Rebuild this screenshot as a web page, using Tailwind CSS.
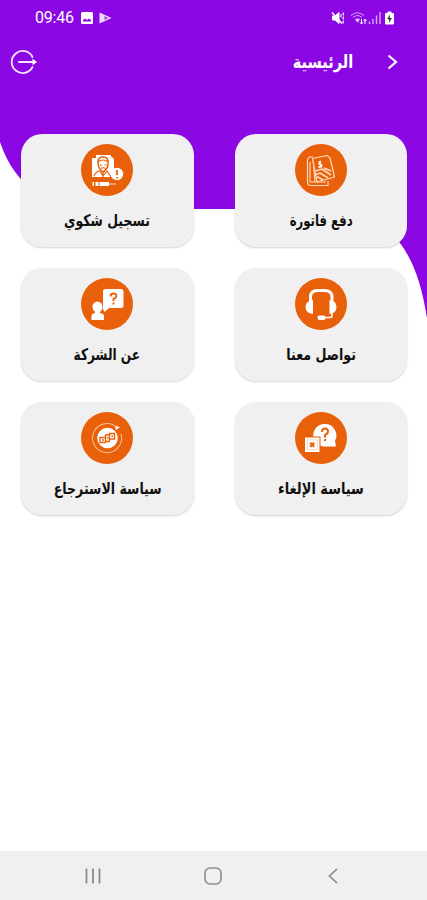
<!DOCTYPE html>
<html lang="ar">
<head>
  <meta charset="UTF-8" />
  <meta name="viewport" content="width=device-width, initial-scale=1.0"/>
  <title>الرئيسية</title>
  <script src="https://cdn.jsdelivr.net/npm/@tailwindcss/browser@4"></script>
</head>
<body class="bg-white font-['DejaVu_Sans',sans-serif]">
  <div class="relative isolate flex flex-col w-[427px] h-[900px] overflow-hidden">

    <!-- purple wave behind the header -->
    <svg class="absolute inset-0 -z-10" width="427" height="330" viewBox="0 0 427 330">
      <path d="M0 0H427V318C422 286 414 262 400 243C385 221 368 209 340 209H92C50 209 15 187 0 142Z" fill="#8b08e4"/>
    </svg>

    <!-- status bar -->
    <div class="flex items-center justify-between h-[35px] pl-[35px] pr-[33px] text-white">
      <div class="flex items-center">
        <span class="w-[39px] text-[16px] leading-4 tracking-[-0.2px] font-['Roboto',sans-serif]">09:46</span>
        <svg class="ml-[7px]" width="12" height="12" viewBox="0 0 12 12">
          <rect width="12" height="12" rx="1.5" fill="#fff"/>
          <path d="M2 9.5V8L4 6.5L6 8L8 6.5L10 8V9.5Z" fill="#8b08e4"/>
        </svg>
        <svg class="ml-[6px]" width="13" height="12" viewBox="0 0 13 12">
          <path d="M0.5 0.5L12.5 6L0.5 11.5Z" fill="#f3d9ff"/>
          <path d="M5.5 4L9 6L5.5 8Z" fill="#9b35e4"/>
        </svg>
      </div>
      <div class="flex items-center">
        <svg width="14" height="14" viewBox="0 0 14 14" fill="none" stroke="#fff">
          <path d="M1.5 5H4L8 1.5V12.5L4 9H1.5Z" fill="#fff"/>
          <path d="M1 1.5L11 12.5" stroke-width="1.4"/>
          <path d="M12.2 1.5V13" stroke-width="1.2" stroke-dasharray="3 1"/>
          <path d="M10 3V6.5"/>
        </svg>
        <svg class="ml-[5px]" width="18" height="14" viewBox="0 0 18 14" fill="none" stroke="#d9a8f8">
          <path d="M1 4.5Q7.5 -1 14 4.5M3 6.5Q7.5 2.5 12 6.5"/>
          <path d="M5 8.5Q7.5 6.5 10 8.5L7.5 11.5Z" fill="#e9c9ff" stroke="none"/>
          <path d="M11.5 8V13M10 11.3L11.5 13L13 11.3M15 13V8M13.7 10L15 8.2L16.5 10" stroke="#fff"/>
        </svg>
        <svg width="13" height="12" viewBox="0 0 13 12" stroke="#d9a8f8" stroke-width="1.4">
          <path d="M1.5 12V9.5M5 12V7M8.5 12V3.5M12 12V0"/>
        </svg>
        <svg class="ml-[4px]" width="9" height="14" viewBox="0 0 9 14">
          <path d="M2.5 0.5H6.5V2H8.2Q9 2 9 3V12.5Q9 13.5 8 13.5H1Q0 13.5 0 12.5V3Q0 2 0.8 2H2.5Z" fill="#fff"/>
          <path d="M5 3.5L2 8.3H4.2L3.8 12L7 7H4.8Z" fill="#333"/>
        </svg>
      </div>
    </div>

    <!-- app bar -->
    <header class="flex items-center h-[54px] pl-[10px] pr-[29px] text-white">
      <svg width="28" height="26" viewBox="0 0 28 26" fill="none" stroke="#f8e4ff" stroke-width="1.8" stroke-linecap="round">
        <path d="M22.5 8A11 11 0 1 0 22.5 18"/>
        <path d="M9 13H24" stroke-width="2.2"/>
        <path d="M22.5 9.8L27 13L22.5 16.2Z" fill="#fff" stroke="none"/>
      </svg>
      <h1 dir="rtl" class="ml-auto w-[62px] flex justify-center whitespace-nowrap text-[18px] leading-6 font-bold scale-x-[0.81]">الرئيسية</h1>
      <svg class="ml-[32px]" width="12" height="18" viewBox="0 0 12 18" fill="none" stroke="#fff" stroke-width="2.2">
        <path d="M2.5 2.5L10 9L2.5 15.5"/>
      </svg>
    </header>

    <!-- menu cards -->
    <main class="grid grid-cols-2 gap-x-[41px] gap-y-[21px] pl-[21px] pr-[20px] pt-[45px]">
      <a class="flex flex-col items-center h-[113px] pt-[10px] rounded-[21px] bg-[#f0f0f0] shadow-[0_1px_2px_rgba(0,0,0,0.18)]">
        <svg width="52" height="52" viewBox="0 0 52 52">
          <circle cx="26" cy="26" r="26" fill="#e9600b"/>
          <path d="M11 14H15V11H29L33 15V33H11Z" fill="#fff"/>
          <path d="M17 18Q17 13 22 13Q28 13 27 20Q27 25 22 28Q17 25 17 18Z" fill="#fff" stroke="#e9600b" stroke-width="1.5"/>
          <path d="M17 18Q22 14 27 18M19 21H21M23.5 21H25.5M20 24.5Q22 23 25 24.5M13 32Q15 27 19 27L22 32L26 27L30 33M22 28V33" fill="none" stroke="#e9600b" stroke-width="1.2"/>
          <circle cx="36" cy="30" r="6.2" fill="#fff"/>
          <path d="M36 26V31M36 33V34.5" stroke="#e9600b" stroke-width="1.8"/>
          <path d="M11.5 40H13M14.5 40H17.5M18.5 40H28" stroke="#fff" stroke-width="4"/>
          <path d="M28 40H35" stroke="#fbc6a0" stroke-width="1.2"/>
        </svg>
        <span dir="rtl" class="mt-[13px] whitespace-nowrap text-[16px] leading-6 font-bold text-[#101010] scale-x-[0.78]">تسجيل شكوي</span>
      </a>

      <a class="flex flex-col items-center h-[113px] pt-[10px] rounded-[21px] bg-[#f0f0f0] shadow-[0_1px_2px_rgba(0,0,0,0.18)]">
        <svg width="52" height="52" viewBox="0 0 52 52" fill="none" stroke="#ffd9bd" stroke-width="1.2" stroke-linejoin="round">
          <circle cx="26" cy="26" r="26" fill="#e9600b" stroke="none"/>
          <path d="M18 13L15 13Q12 14 12.5 18L12.5 38Q12.5 41.5 16 41.5H33V37M15 18V38H31M18 14L20 38"/>
          <path d="M17.5 14.5L32 11.5L35 14L39.5 33L22 38Z" fill="#e9600b"/>
          <path d="M20 27L27 25L36 31M20 31L25 29L33 34M21 34L23 33L28 36M29 24L36 27" stroke-width="1.7"/>
          <path d="M26 17.5Q23.5 18 24.5 20Q27 20.5 26.5 22.5L23.5 23" stroke="#fff" stroke-width="1.8"/>
        </svg>
        <span dir="rtl" class="mt-[13px] whitespace-nowrap text-[16px] leading-6 font-bold text-[#101010] scale-x-[0.73]">دفع فاتورة</span>
      </a>

      <a class="flex flex-col items-center h-[113px] pt-[10px] rounded-[21px] bg-[#f0f0f0] shadow-[0_1px_2px_rgba(0,0,0,0.18)]">
        <svg width="52" height="52" viewBox="0 0 52 52">
          <circle cx="26" cy="26" r="26" fill="#e9600b"/>
          <path d="M24.5 11H40Q42.5 11 42.5 13.5V27.5Q42.5 30 40 30H28L23.5 34L22 31V13.5Q22 11 24.5 11Z" fill="#fff"/>
          <path d="M29.5 18.5Q29.5 15.5 32.5 15.5Q35.5 15.5 35.3 18.3Q35 20 32.5 21V23M32.5 24.5V26.5" fill="none" stroke="#e9600b" stroke-width="1.9"/>
          <ellipse cx="16.5" cy="29" rx="5" ry="5.5" fill="#fff"/>
          <path d="M14 32H19V35Q23 35.5 23 38V42H10.5V38Q10.5 35.5 14 35Z" fill="#fff"/>
        </svg>
        <span dir="rtl" class="mt-[13px] whitespace-nowrap text-[16px] leading-6 font-bold text-[#101010] scale-x-[0.76]">عن الشركة</span>
      </a>

      <a class="flex flex-col items-center h-[113px] pt-[10px] rounded-[21px] bg-[#f0f0f0] shadow-[0_1px_2px_rgba(0,0,0,0.18)]">
        <svg width="52" height="52" viewBox="0 0 52 52">
          <circle cx="26" cy="26" r="26" fill="#e9600b"/>
          <path d="M15.5 24V19Q15.5 12.5 23 12.5H29Q37 12.5 37 19V24" fill="none" stroke="#fff" stroke-width="3"/>
          <path d="M18 22V36Q10.5 35 10.5 29Q10.5 23 18 22ZM34.5 22V36Q41.5 35 41.5 29Q41.5 23 34.5 22Z" fill="#fff"/>
          <path d="M37 34V37.5Q37 39.5 35 39.5H29" fill="none" stroke="#fff" stroke-width="1.6"/>
          <rect x="22.5" y="37.5" width="8" height="4.5" rx="2" fill="#fff"/>
        </svg>
        <span dir="rtl" class="mt-[13px] whitespace-nowrap text-[16px] leading-6 font-bold text-[#101010] scale-x-[0.79]">تواصل معنا</span>
      </a>

      <a class="flex flex-col items-center h-[113px] pt-[10px] rounded-[21px] bg-[#f0f0f0] shadow-[0_1px_2px_rgba(0,0,0,0.18)]">
        <svg width="52" height="52" viewBox="0 0 52 52" fill="none">
          <circle cx="26" cy="26" r="26" fill="#e9600b"/>
          <path d="M36 15.5A14.5 14.5 0 1 0 40 22" stroke="#f9b98b" stroke-width="1.1"/>
          <path d="M34 14L39 15L35 18Z" fill="#fff"/>
          <circle cx="26.5" cy="26" r="10.3" fill="#fff"/>
          <path d="M19 25.5H24.5V30.5H19ZM24.5 23H28.5V29.5H24.5ZM28.5 21.5H33.5V27H28.5ZM21 28H23M26 26H27.5M30.5 24.2H32" stroke="#e9600b" stroke-width="1.4"/>
        </svg>
        <span dir="rtl" class="mt-[13px] whitespace-nowrap text-[16px] leading-6 font-bold text-[#101010] scale-x-[0.785]">سياسة الاسترجاع</span>
      </a>

      <a class="flex flex-col items-center h-[113px] pt-[10px] rounded-[21px] bg-[#f0f0f0] shadow-[0_1px_2px_rgba(0,0,0,0.18)]">
        <svg width="52" height="52" viewBox="0 0 52 52">
          <circle cx="26" cy="26" r="26" fill="#e9600b"/>
          <path d="M29.5 12A11.5 11.5 0 0 1 40 29L41 34.5H29.5A11.2 11.2 0 0 1 29.5 12Z" fill="#fff"/>
          <path d="M27 20Q27 16.5 30 16.5Q33 16.5 33 19.5Q33 21.5 30 23V25.5M30 27V29" fill="none" stroke="#e9600b" stroke-width="2"/>
          <rect x="9.5" y="25" width="15.5" height="15.5" fill="#fff" stroke="#e9600b"/>
          <rect x="12.2" y="27.8" width="10" height="10" fill="none" stroke="#fbd0b0" stroke-width="0.8"/>
          <path d="M15.2 30.8L19.2 34.8M19.2 30.8L15.2 34.8" stroke="#e9600b" stroke-width="2.2"/>
        </svg>
        <span dir="rtl" class="mt-[13px] whitespace-nowrap text-[16px] leading-6 font-bold text-[#101010] scale-x-[0.81]">سياسة الإلغاء</span>
      </a>
    </main>

    <!-- system navigation -->
    <nav class="mt-auto grid grid-cols-3 items-center justify-items-center h-[49px] pl-[33px] pr-[34px] bg-[#f0f0f0]">
      <svg width="16" height="16" viewBox="0 0 16 16" stroke="#8c8c8c" stroke-width="1.8">
        <path d="M1.5 0.5V15.5M8 0.5V15.5M14.5 0.5V15.5"/>
      </svg>
      <svg width="18" height="18" viewBox="0 0 18 18" fill="none" stroke="#8c8c8c" stroke-width="1.6">
        <rect x="1" y="1" width="16" height="16" rx="5"/>
      </svg>
      <svg width="10" height="16" viewBox="0 0 10 16" fill="none" stroke="#8c8c8c" stroke-width="1.7">
        <path d="M9 1L1.5 8L9 15"/>
      </svg>
    </nav>
  </div>
</body>
</html>
